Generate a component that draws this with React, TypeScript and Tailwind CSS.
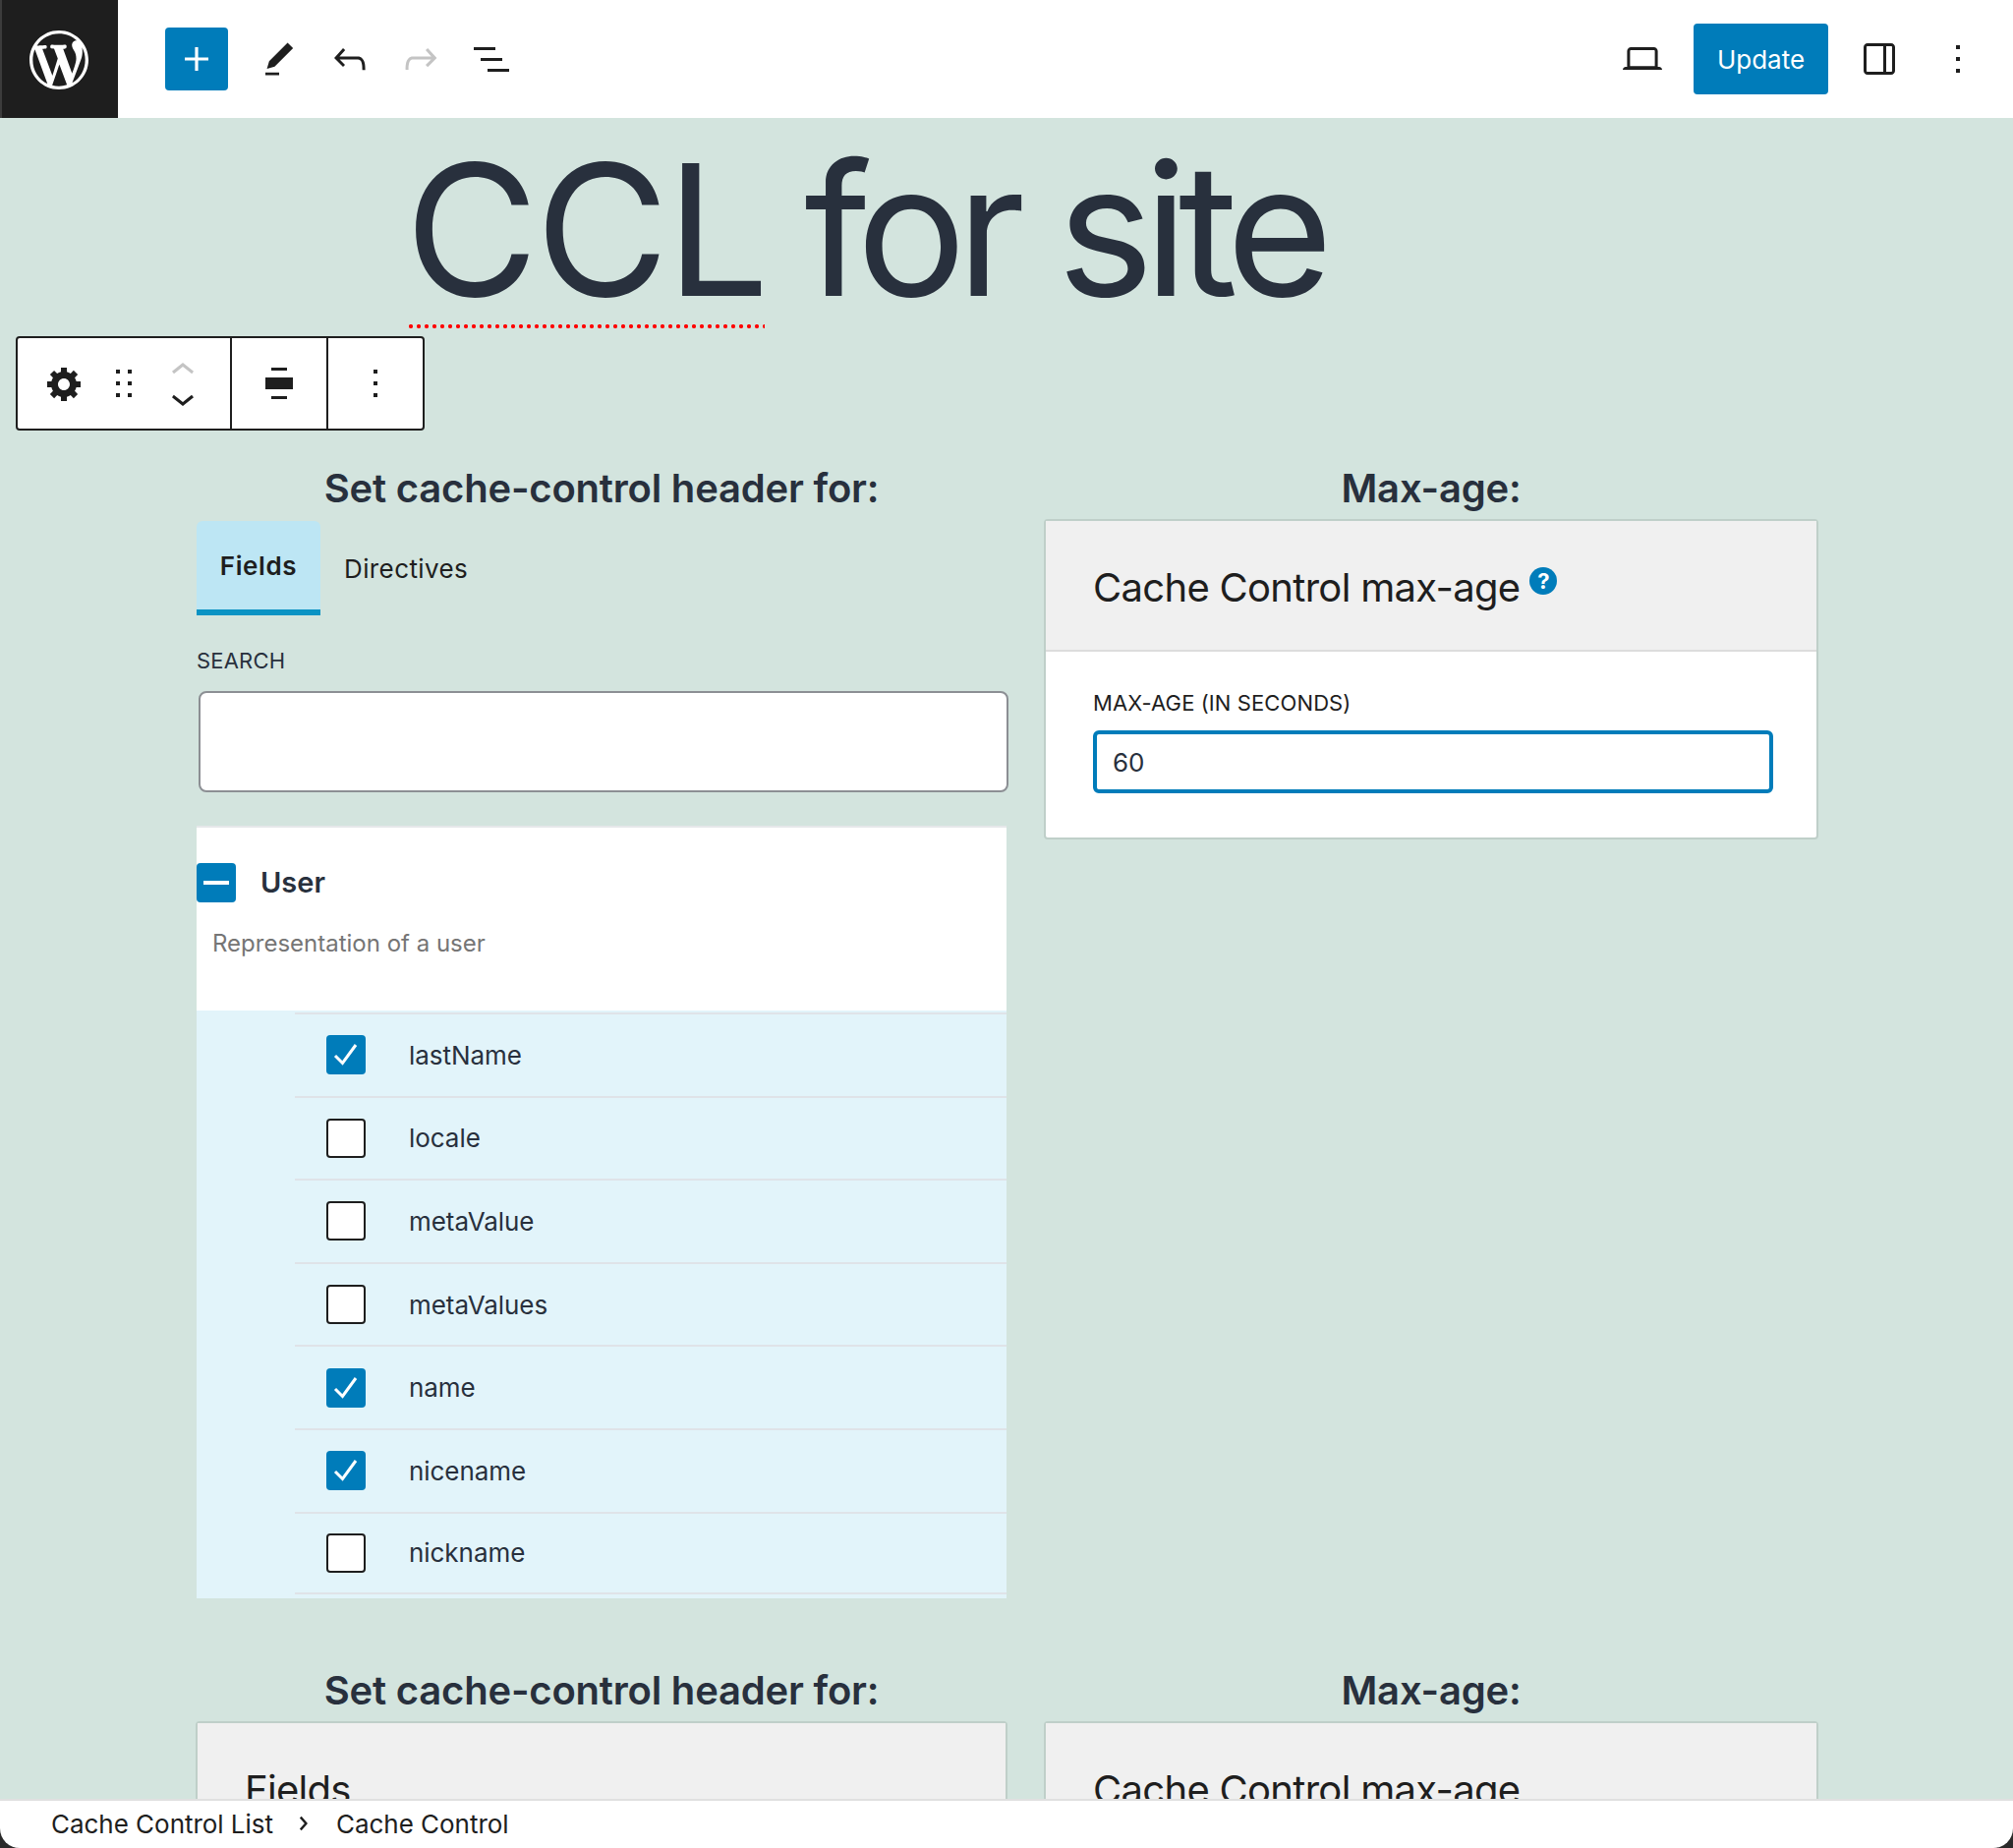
import React from "react";

const D = "#1e1e1e";
function Ic({ d, size = 48, fill = D, vb = "0 0 24 24", cls = "" }: { d: string; size?: number; fill?: string; vb?: string; cls?: string }) {
  return (
    <svg viewBox={vb} width={size} height={size} fill={fill} className={"block shrink-0 " + cls}>
      <path d={d} />
    </svg>
  );
}

const WP = "M20 10c0-5.51-4.49-10-10-10C4.48 0 0 4.49 0 10c0 5.52 4.48 10 10 10 5.51 0 10-4.48 10-10zM7.78 15.37L4.37 6.22c.55-.02 1.17-.08 1.17-.08.5-.06.44-1.13-.06-1.11 0 0-1.45.11-2.37.11-.18 0-.37 0-.58-.01C4.12 2.69 6.87 1.11 10 1.11c2.33 0 4.45.87 6.05 2.34-.68-.11-1.65.39-1.65 1.58 0 .74.45 1.36.9 2.1.35.61.55 1.36.55 2.46 0 1.49-1.4 5-1.4 5l-3.03-8.37c.54-.02.82-.17.82-.17.5-.05.44-1.25-.06-1.22 0 0-1.44.12-2.38.12-.87 0-2.33-.12-2.33-.12-.5-.03-.56 1.2-.06 1.22l.92.08 1.26 3.41zM17.41 10c.24-.64.74-1.87.43-4.25.7 1.29 1.05 2.71 1.05 4.25 0 3.29-1.73 6.24-4.4 7.78.97-2.59 1.94-5.2 2.92-7.78zM6.1 18.09C3.12 16.65 1.11 13.53 1.11 10c0-1.3.23-2.48.72-3.59C3.25 10.3 4.67 14.2 6.1 18.09zm4.03-6.63l2.58 6.98c-.86.29-1.76.45-2.71.45-.79 0-1.57-.11-2.29-.33.81-2.38 1.62-4.74 2.42-7.1z";
const PLUS = "M18 11.2h-5.2V6h-1.6v5.2H6v1.6h5.2V18h1.6v-5.2H18z";
const EDIT = "M20.1 5.1L16.9 2 6.2 12.7l-1.3 4.4 4.5-1.3L20.1 5.1zM4 20.8h8v-1.5H4v1.5z";
const UNDO = "M18.3 11.7c-.6-.6-1.4-.9-2.3-.9H6.7l2.9-3.3-1.1-1-4.5 5L8.5 16l1-1-2.7-2.7H16c.5 0 .9.2 1.3.5 1 1 1 3.4 1 4.5v.3h1.5v-.2c0-1.5 0-4.3-1.5-5.7z";
const REDO = "M15.6 6.5l-1.1 1 2.9 3.3H8c-.9 0-1.7.3-2.3.9-1.4 1.5-1.4 4.2-1.4 5.6v.2h1.5v-.3c0-1.1 0-3.5 1-4.5.3-.3.7-.5 1.3-.5h9.2L14.5 15l1.1 1.1 4.6-4.6-4.6-5z";
const LIST = "M3 6h11v1.5H3V6zm3.5 5.5h11V13h-11v-1.5zM21 17H10v1.5h11V17z";
const LAPTOP = "M20.5 16h-.7V8c0-1.1-.9-2-2-2H6.2c-1.1 0-2 .9-2 2v8h-.7c-.8 0-1.5.7-1.5 1.5h20c0-.8-.7-1.5-1.5-1.5zM5.7 8c0-.3.2-.5.5-.5h11.6c.3 0 .5.2.5.5v7.6H5.7V8z";
const SIDEBAR = "M18 4H6c-1.1 0-2 .9-2 2v12c0 1.1.9 2 2 2h12c1.1 0 2-.9 2-2V6c0-1.1-.9-2-2-2zm-4 14.5H6c-.3 0-.5-.2-.5-.5V6c0-.3.2-.5.5-.5h8v13zm4.5-.5c0 .3-.2.5-.5.5h-2.5v-13H18c.3 0 .5.2.5.5v12z";
const MORE = "M13 19h-2v-2h2v2zm0-6h-2v-2h2v2zm0-6h-2V5h2v2z";
const DRAG = "M8 7h2V5H8v2zm0 6h2v-2H8v2zm0 6h2v-2H8v2zm6-14v2h2V5h-2zm0 8h2v-2h-2v2zm0 6h2v-2h-2v2z";
const UP = "M6.5 12.4L12 8l5.5 4.4-.9 1.2L12 10l-4.5 3.6-1-1.2z";
const DOWN = "M17.5 11.6L12 16l-5.5-4.4.9-1.2L12 14l4.5-3.6 1 1.2z";
const ALIGN = "M8 4h8v1.5H8zM5 9h14v6H5zM8 18.5h8V20H8z";
const GEAR = "M18 12h-2.18c-.17.7-.44 1.35-.81 1.93l1.54 1.54-2.1 2.1-1.54-1.54c-.58.36-1.23.63-1.91.79V19H8v-2.18c-.68-.16-1.33-.43-1.91-.79l-1.54 1.54-2.12-2.12 1.54-1.54c-.36-.58-.63-1.23-.79-1.91H1V9.03h2.17c.16-.7.44-1.35.8-1.94L2.43 5.55l2.1-2.1 1.54 1.54c.58-.37 1.24-.64 1.93-.81V2h3v2.18c.68.16 1.33.43 1.91.79l1.54-1.54 2.12 2.12-1.54 1.54c.36.59.64 1.24.8 1.94H18V12zm-8.5 1.5c1.66 0 3-1.34 3-3s-1.34-3-3-3-3 1.34-3 3 1.34 3 3 3z";

function TopBar() {
  return (
    <header className="flex h-[120px] shrink-0 items-center bg-white">
      <div className="flex h-[120px] w-[120px] items-center justify-center bg-[#1e1e1e] pt-[2px] shadow-[inset_2px_0_0_#3c3c3c]">
        <Ic d={WP} size={72} fill="#fff" vb="-2 -2 24 24" />
      </div>
      <div className="ml-[48px] flex h-[64px] w-[64px] items-center justify-center rounded-[4px] bg-[#007cba]">
        <Ic d={PLUS} fill="#fff" />
      </div>
      <div className="ml-[28px] flex items-center gap-[24px]">
        <Ic d={EDIT} size={42} cls="mx-[3px] mt-[2px]" />
        <Ic d={UNDO} />
        <Ic d={REDO} fill="#c4c4c4" />
        <Ic d={LIST} />
      </div>
      <div className="ml-auto flex items-center">
        <Ic d={LAPTOP} />
        <div className="ml-[28px] flex h-[72px] w-[137px] items-center justify-center rounded-[4px] bg-[#007cba] text-[26px] text-white">Update</div>
        <Ic d={SIDEBAR} cls="ml-[28px]" />
        <Ic d={MORE} cls="ml-[32px] mr-[32px]" />
      </div>
    </header>
  );
}

function BlockToolbar() {
  return (
    <div className="flex h-[96px] w-[416px] rounded-[4px] border-2 border-[#1e1e1e] bg-white">
      <div className="flex w-[218px] items-center border-r-2 border-[#1e1e1e]">
        <Ic d={GEAR} size={40} vb="0 0 20 20" cls="ml-[28px]" />
        <Ic d={DRAG} cls="ml-[16px]" />
        <div className="ml-[12px] flex flex-col">
          <Ic d={UP} fill="#c4c4c4" cls="-mb-[20px] -mt-[9px]" />
          <Ic d={DOWN} cls="-mb-[10px]" />
        </div>
      </div>
      <div className="flex w-[98px] items-center justify-center border-r-2 border-[#1e1e1e]">
        <Ic d={ALIGN} />
      </div>
      <div className="flex flex-1 items-center justify-center">
        <Ic d={MORE} />
      </div>
    </div>
  );
}

function Heading({ children }: { children: React.ReactNode }) {
  return <h2 className="h-[60px] pt-[1px] text-center text-[40px] font-semibold leading-[56px] tracking-[-0.2px] text-[#28303d]">{children}</h2>;
}

function Card({ title, help, children }: { title: string; help?: boolean; children?: React.ReactNode }) {
  return (
    <div className="rounded-[4px] border-2 border-[#bfcfc9] bg-white">
      <div className="flex h-[133px] items-start border-b-2 border-[#dcdcdc] bg-[#f0f0f0] pl-[48px] pt-[40px] text-[40px] leading-[56px] tracking-[-0.7px] text-[#1e1e1e]">
        {title}
        {help && (
          <span className="ml-[10px] mt-[7px] flex h-[28px] w-[28px] items-center justify-center rounded-full bg-[#007cba] text-[22px] font-bold leading-none tracking-normal text-white">?</span>
        )}
      </div>
      {children}
    </div>
  );
}

const rows: [string, boolean][] = [
  ["lastName", true],
  ["locale", false],
  ["metaValue", false],
  ["metaValues", false],
  ["name", true],
  ["nicename", true],
  ["nickname", false],
];

function Box({ checked }: { checked: boolean }) {
  return checked ? (
    <span className="flex h-[40px] w-[40px] shrink-0 items-center justify-center rounded-[4px] bg-[#007cba]">
      <svg viewBox="0 0 40 40" width={40} height={40} fill="none" stroke="#fff" strokeWidth="3">
        <path d="M9 21l7.5 7.5L30 10" />
      </svg>
    </span>
  ) : (
    <span className="h-[40px] w-[40px] shrink-0 rounded-[4px] border-2 border-[#1e1e1e] bg-white" />
  );
}

function FieldsColumn() {
  return (
    <div className="pl-[1px] pt-[2px]">
      <div className="flex h-[96px] items-start">
        <div className="flex h-[96px] w-[126px] justify-center rounded-t-[6px] border-b-[6px] border-[#0a93c4] bg-[#bde6f4] pt-[28px] text-[26px] font-semibold leading-[36px] tracking-[0.6px] text-[#1e1e1e]">Fields</div>
        <div className="ml-[24px] pt-[31px] text-[26px] leading-[36px] tracking-[0.4px] text-[#1e1e1e]">Directives</div>
      </div>
      <div className="mt-[30px] text-[22px] leading-[32px] tracking-[0.2px] text-[#28303d]">SEARCH</div>
      <div className="-mr-[1px] ml-[2px] mt-[15px] h-[103px] rounded-[8px] border-2 border-[#8c8f94] bg-white" />
      <div className="mt-[34px] w-[824px]">
        <div className="h-[188px] border-t-2 border-[#e6e8ea] bg-white">
          <div className="flex items-center pt-[36px]">
            <span className="flex h-[40px] w-[40px] items-center justify-center rounded-[4px] bg-[#007cba]">
              <span className="block h-[4px] w-[26px] bg-white" />
            </span>
            <span className="ml-[25px] text-[29px] font-semibold leading-[40px] text-[#28303d]">User</span>
          </div>
          <p className="ml-[16px] mt-[24px] text-[24px] leading-[36px] text-[#757575]">Representation of a user</p>
        </div>
        <div className="h-[598px] bg-[#e2f4fa] pl-[100px] pt-[2px]">
          {rows.map(([name, on]) => (
            <div key={name} className="flex h-[84.6px] items-center border-t-2 border-[#dfe3e8] pl-[32px] last:border-b-2">
              <Box checked={on} />
              <span className="ml-[44px] pt-[1px] text-[26px] leading-[36px] tracking-[-0.05px] text-[#28303d]">{name}</span>
            </div>
          ))}
        </div>
      </div>
    </div>
  );
}

function MaxAgeColumn() {
  return (
    <Card title="Cache Control max-age" help>
      <div className="h-[189px] pl-[48px] pr-[44px] pt-[36px]">
        <div className="text-[22px] leading-[32px] tracking-[0.1px] text-[#1e1e1e]">MAX-AGE (IN SECONDS)</div>
        <div className="mt-[12px] flex h-[64px] items-center rounded-[6px] border-4 border-[#007cba] bg-white pl-[16px] text-[26px] text-[#28303d]">60</div>
      </div>
    </Card>
  );
}

export default function App() {
  return (
    <div className="flex h-[1880px] w-[2048px] flex-col overflow-hidden bg-[#2a2a2a] font-['Inter',sans-serif]">
      <TopBar />
      <main className="min-h-0 flex-1 overflow-hidden bg-[#d3e4de]">
        <div className="h-[222px] pl-[412px] pt-[6px]">
          <h1 className="relative w-fit text-[186px] font-normal leading-[216px] text-[#28303d]">
            <span className="tracking-[-3px]">CCL</span>
            <span className="-ml-[4px] tracking-[-10px]"> for site</span>
            <span className="absolute left-[2px] top-[204px] h-[4px] w-[364px] bg-[radial-gradient(circle,#ff0000_1.8px,transparent_2.4px)] bg-[length:8px_4px]" />
          </h1>
        </div>
        <div className="pl-[16px]">
          <BlockToolbar />
        </div>
        <div className="mt-[30px] grid grid-cols-[826px_788px] gap-x-[37px] pl-[199px]">
          <div>
            <Heading>Set cache-control header for:</Heading>
            <FieldsColumn />
          </div>
          <div>
            <Heading>Max-age:</Heading>
            <MaxAgeColumn />
          </div>
        </div>
        <div className="mt-[65px] grid grid-cols-[826px_788px] gap-x-[37px] pl-[199px]">
          <div>
            <Heading>Set cache-control header for:</Heading>
            <Card title="Fields" />
          </div>
          <div>
            <Heading>Max-age:</Heading>
            <Card title="Cache Control max-age" />
          </div>
        </div>
      </main>
      <footer className="flex h-[50px] shrink-0 items-center rounded-b-[20px] border-t-2 border-[#e0e0e0] bg-white pb-[2px] pl-[52px] text-[26px] tracking-[-0.03px] text-[#1e1e1e]">
        <span>Cache Control List</span>
        <svg viewBox="0 0 12 20" width={10} height={16} fill="none" stroke={D} strokeWidth="3" className="ml-[26px] mr-[28px]">
          <path d="M2 2l7 8-7 8" />
        </svg>
        <span>Cache Control</span>
      </footer>
    </div>
  );
}
